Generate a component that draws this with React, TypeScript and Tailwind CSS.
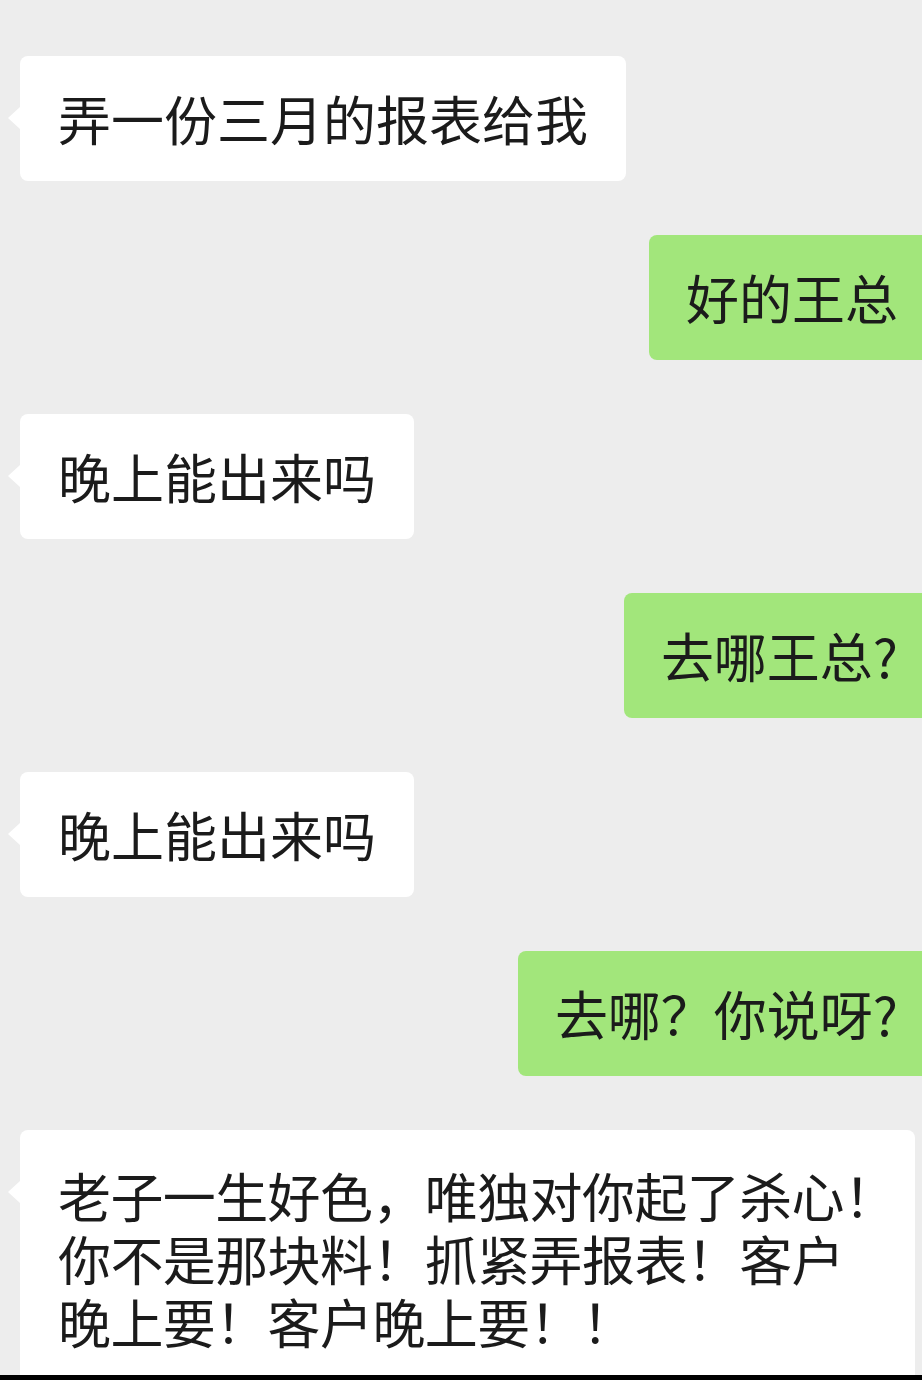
const font = {
  fontFamily: '"Noto Sans CJK SC", "Noto Sans", sans-serif',
};

function Left({ children, className = "" }: { children: React.ReactNode; className?: string }) {
  return (
    <div className="flex justify-start pl-[20px]">
      <div
        className={`relative bg-white rounded-[8px] px-[38px] pt-[31px] pb-[31px] text-[53px] leading-[63px] text-[#1b1b1b] whitespace-nowrap ${className}`}
      >
        {/* tail */}
        <span className="absolute left-[-12px] top-[51px] w-0 h-0 border-y-[11px] border-y-transparent border-r-[12px] border-r-white" />
        {children}
      </div>
    </div>
  );
}

function Right({ children }: { children: React.ReactNode }) {
  return (
    <div className="flex justify-end">
      <div className="bg-[#a2e67b] rounded-l-[8px] pl-[37px] pr-[24px] pt-[31px] pb-[31px] text-[53px] leading-[63px] text-[#1b1b1b] whitespace-nowrap">
        {children}
      </div>
    </div>
  );
}

export default function App() {
  return (
    <div
      className="w-[922px] h-[1380px] overflow-hidden bg-[#ededed] relative"
      style={font}
    >
      <div className="flex flex-col gap-[54px] pt-[56px]">
        <Left>弄一份三月的报表给我</Left>
        <Right>好的王总</Right>
        <Left>晚上能出来吗</Left>
        <Right>去哪王总?</Right>
        <Left>晚上能出来吗</Left>
        <Right>去哪？你说呀?</Right>
        <Left className="w-[895px] pt-[34px] tracking-[-0.6px]">
          <div>老子一生好色，唯独对你起了杀心！</div>
          <div>你不是那块料！抓紧弄报表！客户</div>
          <div>晚上要！客户晚上要！<span className="tracking-[-14px]">！</span></div>
        </Left>
      </div>
      {/* bottom edge strip */}
      <div className="absolute bottom-0 left-0 right-0 h-[5px] bg-black" />
    </div>
  );
}
